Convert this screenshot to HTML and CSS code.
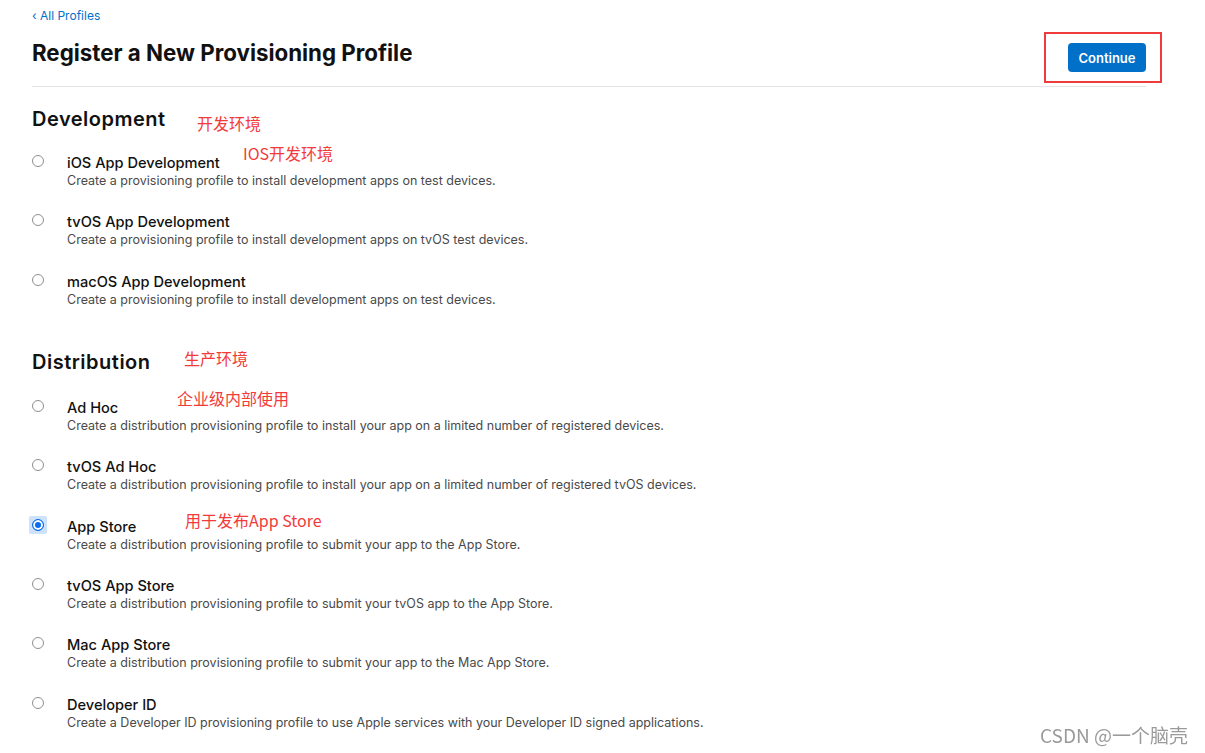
FILE: index.html
```html
<!DOCTYPE html>
<html lang="en">
<head>
  <meta charset="UTF-8" />
  <title>Register a New Provisioning Profile</title>
  <link rel="stylesheet" href="styles.css">
</head>
<body>

<div class="page">
  <a class="back-link" href="#">&lsaquo; All Profiles</a>

  <header class="page-header">
    <h1>Register a New Provisioning Profile</h1>
    <div class="actions">
      <button class="btn-continue">Continue</button>
      <span class="mark-box"></span>
    </div>
  </header>

  <section class="group">
    <h2>Development</h2>
    <span class="note note-dev">开发环境</span>

    <label class="option">
      <span class="radio-wrap"><input type="radio" name="type"></span>
      <span class="option-text">
        <span class="option-title">iOS App Development</span>
        <span class="option-desc">Create a provisioning profile to install development apps on test devices.</span>
      </span>
      <span class="note note-ios">IOS开发环境</span>
    </label>

    <label class="option">
      <span class="radio-wrap"><input type="radio" name="type"></span>
      <span class="option-text">
        <span class="option-title">tvOS App Development</span>
        <span class="option-desc">Create a provisioning profile to install development apps on tvOS test devices.</span>
      </span>
    </label>

    <label class="option">
      <span class="radio-wrap"><input type="radio" name="type"></span>
      <span class="option-text">
        <span class="option-title">macOS App Development</span>
        <span class="option-desc">Create a provisioning profile to install development apps on test devices.</span>
      </span>
    </label>
  </section>

  <section class="group group-dist">
    <h2>Distribution</h2>
    <span class="note note-dist">生产环境</span>

    <label class="option">
      <span class="radio-wrap"><input type="radio" name="type"></span>
      <span class="option-text">
        <span class="option-title">Ad Hoc</span>
        <span class="option-desc">Create a distribution provisioning profile to install your app on a limited number of registered devices.</span>
      </span>
      <span class="note note-adhoc">企业级内部使用</span>
    </label>

    <label class="option">
      <span class="radio-wrap"><input type="radio" name="type"></span>
      <span class="option-text">
        <span class="option-title">tvOS Ad Hoc</span>
        <span class="option-desc">Create a distribution provisioning profile to install your app on a limited number of registered tvOS devices.</span>
      </span>
    </label>

    <label class="option">
      <span class="radio-wrap selected"><input type="radio" name="type" checked></span>
      <span class="option-text">
        <span class="option-title">App Store</span>
        <span class="option-desc">Create a distribution provisioning profile to submit your app to the App Store.</span>
      </span>
      <span class="note note-store">用于发布App Store</span>
    </label>

    <label class="option">
      <span class="radio-wrap"><input type="radio" name="type"></span>
      <span class="option-text">
        <span class="option-title">tvOS App Store</span>
        <span class="option-desc">Create a distribution provisioning profile to submit your tvOS app to the App Store.</span>
      </span>
    </label>

    <label class="option">
      <span class="radio-wrap"><input type="radio" name="type"></span>
      <span class="option-text">
        <span class="option-title">Mac App Store</span>
        <span class="option-desc">Create a distribution provisioning profile to submit your app to the Mac App Store.</span>
      </span>
    </label>

    <label class="option">
      <span class="radio-wrap"><input type="radio" name="type"></span>
      <span class="option-text">
        <span class="option-title">Developer ID</span>
        <span class="option-desc">Create a Developer ID provisioning profile to use Apple services with your Developer ID signed applications.</span>
      </span>
    </label>
  </section>
</div>

<div class="watermark">CSDN @一个脑壳</div>

</body>
</html>
```

FILE: styles.css
```css
body {
  margin: 0;
  font-family: Inter, "Noto Sans", sans-serif;
  background: #fff;
  color: #1d1d1f;
  overflow: hidden;
}

.page {
  width: 1114px;
  margin-left: 32px;
  position: relative;
}

.back-link {
  display: block;
  padding-top: 8px;
  font-size: 12px;
  line-height: 16px;
  color: #0070c9;
  text-decoration: none;
}

.page-header {
  display: flex;
  justify-content: space-between;
  align-items: flex-start;
  padding: 14px 0 14px;
  border-bottom: 1px solid #e3e3e3;
}

.page-header h1 {
  margin: 0;
  font-size: 22.3px;
  line-height: 30px;
  font-weight: 700;
  color: #111;
}

.actions {
  position: relative;
  margin-top: 5px;
}

.btn-continue {
  display: block;
  width: 78px;
  height: 29px;
  border: none;
  border-radius: 4px;
  background: #0070c9;
  color: #fff;
  font-family: inherit;
  font-size: 13px;
  font-weight: 600;
  cursor: pointer;
}

.mark-box {
  position: absolute;
  left: -24px;
  top: -11px;
  width: 114px;
  height: 47px;
  border: 2px solid #ee3b3b;
}

.group {
  position: relative;
  padding-top: 20px;
}

.group h2 {
  margin: 0;
  font-size: 20px;
  line-height: 24px;
  font-weight: 600;
  letter-spacing: 0.5px;
  color: #111;
}

.group-dist {
  padding-top: 41px;
}

.option {
  position: relative;
  display: flex;
  margin-top: 23.4px;
  cursor: pointer;
}

.group h2 + .note + .option {
  margin-top: 23px;
}

.group-dist h2 + .note + .option {
  margin-top: 25px;
}

.radio-wrap {
  width: 12px;
  height: 12px;
  margin-top: 1px;
  margin-right: 23px;
  position: relative;
}

.radio-wrap.selected::before {
  content: "";
  position: absolute;
  left: -3px;
  top: -3px;
  width: 18px;
  height: 18px;
  border-radius: 2px;
  background: #cfe2fb;
}

.radio-wrap input {
  appearance: none;
  position: relative;
  display: block;
  margin: 0;
  width: 12px;
  height: 12px;
  border: 1px solid #8f8f8f;
  border-radius: 50%;
  background: #fff;
}

.radio-wrap input:checked {
  border-color: #0a6cf0;
  background: #0a6cf0;
  box-shadow: inset 0 0 0 2px #fff;
}

.option-text {
  display: flex;
  flex-direction: column;
}

.option-title {
  font-size: 14.6px;
  line-height: 18px;
  font-weight: 500;
  color: #111;
}

.option-desc {
  font-size: 12.5px;
  line-height: 18px;
  color: #4a4a4a;
}

.note {
  position: absolute;
  font-family: "Noto Sans CJK SC", sans-serif;
  font-size: 16px;
  line-height: 20px;
  color: #f23a3a;
  white-space: nowrap;
}

.note-dev { left: 165px; top: 26px; }
.note-ios { left: 211px; top: -11px; }
.note-dist { left: 152px; top: 39px; }
.note-adhoc { left: 145px; top: -11px; }
.note-store { left: 153px; top: -8px; }

.watermark {
  position: fixed;
  left: 1040px;
  top: 722px;
  font-family: "Noto Sans CJK SC", sans-serif;
  font-size: 19px;
  line-height: 26px;
  color: #9a9a9a;
}
```
